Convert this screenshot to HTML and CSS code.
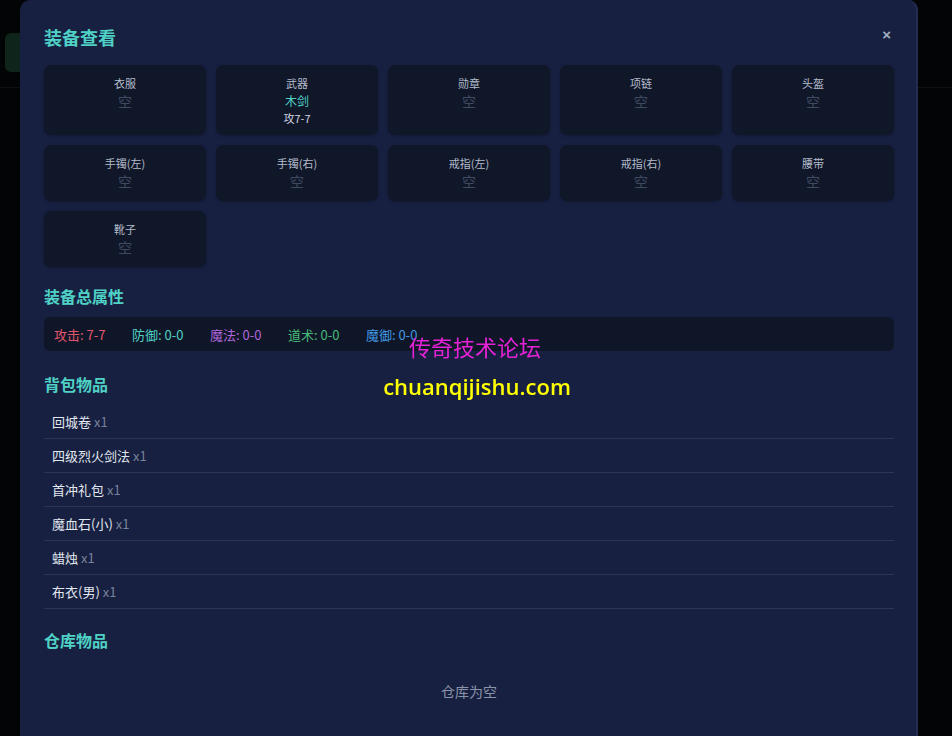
FILE: index.html
```html
<!DOCTYPE html>
<html lang="zh-CN">
<head>
  <meta charset="UTF-8">
  <title>装备查看</title>
  <link rel="stylesheet" href="styles.css">
</head>
<body>

<!-- 底层页面 -->
<div class="page">
  <div class="topbar">
    <button class="back-btn"></button>
  </div>
</div>

<!-- 装备查看弹窗 -->
<div class="overlay">
  <div class="modal">
    <div class="modal-header">
      <h2>装备查看</h2>
      <span class="close">×</span>
    </div>

    <div class="equip-grid">
      <div class="slot"><div class="slot-name">衣服</div><div class="slot-empty">空</div></div>
      <div class="slot"><div class="slot-name">武器</div><div class="slot-item">木剑</div><div class="slot-attr">攻7-7</div></div>
      <div class="slot"><div class="slot-name">勋章</div><div class="slot-empty">空</div></div>
      <div class="slot"><div class="slot-name">项链</div><div class="slot-empty">空</div></div>
      <div class="slot"><div class="slot-name">头盔</div><div class="slot-empty">空</div></div>
      <div class="slot"><div class="slot-name">手镯(左)</div><div class="slot-empty">空</div></div>
      <div class="slot"><div class="slot-name">手镯(右)</div><div class="slot-empty">空</div></div>
      <div class="slot"><div class="slot-name">戒指(左)</div><div class="slot-empty">空</div></div>
      <div class="slot"><div class="slot-name">戒指(右)</div><div class="slot-empty">空</div></div>
      <div class="slot"><div class="slot-name">腰带</div><div class="slot-empty">空</div></div>
      <div class="slot"><div class="slot-name">靴子</div><div class="slot-empty">空</div></div>
    </div>

    <h3>装备总属性</h3>
    <div class="stats">
      <span class="atk">攻击: 7-7</span>
      <span class="def">防御: 0-0</span>
      <span class="mag">魔法: 0-0</span>
      <span class="tao">道术: 0-0</span>
      <span class="mdef">魔御: 0-0</span>
    </div>

    <h3>背包物品</h3>
    <ul class="bag">
      <li>回城卷 <span class="qty">x1</span></li>
      <li>四级烈火剑法 <span class="qty">x1</span></li>
      <li>首冲礼包 <span class="qty">x1</span></li>
      <li>魔血石(小) <span class="qty">x1</span></li>
      <li>蜡烛 <span class="qty">x1</span></li>
      <li>布衣(男) <span class="qty">x1</span></li>
    </ul>

    <h3>仓库物品</h3>
    <div class="empty-tip">仓库为空</div>
  </div>
</div>

<!-- 水印 -->
<div class="watermark">
  <div class="wm-cn">传奇技术论坛</div>
  <div class="wm-en">chuanqijishu.com</div>
</div>

</body>
</html>
```

FILE: styles.css
```css
body {
  margin: 0;
  background: #060709;
  font-family: "Noto Sans CJK SC", "Noto Sans", sans-serif;
  overflow: hidden;
  height: 736px;
}
.page {
  height: 100%;
}
.topbar {
  height: 88px;
  border-bottom: 1px solid #16191f;
  box-sizing: border-box;
  padding: 33px 0 0 5px;
}
.back-btn {
  width: 40px;
  height: 39px;
  background: #17392a;
  border: none;
  border-radius: 6px;
}
/* 弹窗 */
.overlay {
  position: fixed;
  top: 0; left: 0;
  width: 100%; height: 100%;
  background: rgba(0,0,0,0.35);
}
.modal {
  margin-left: 20px;
  width: 898px;
  min-height: 800px;
  box-sizing: border-box;
  background: #172041;
  box-shadow: inset -2px 0 0 #222c50;
  border-radius: 10px 10px 0 0;
  padding: 24px 24px;
}
.modal-header {
  display: flex;
  justify-content: space-between;
  align-items: center;
  margin-bottom: 15px;
}
.modal-header h2 {
  margin: 0;
  font-size: 18px;
  line-height: 26px;
  color: #4fd1c5;
}
.close {
  font-family: "Liberation Sans", sans-serif;
  font-weight: bold;
  color: #a0aec0;
  font-size: 15px;
  line-height: 20px;
  margin: -4px 3px 0 0;
}
.equip-grid {
  display: grid;
  grid-template-columns: repeat(5, 1fr);
  gap: 10px;
}
.slot {
  background: #101729;
  border-radius: 7px;
  padding: 10px 6px;
  text-align: center;
  box-shadow: 0 1px 3px rgba(0,0,0,0.25);
}
.slot-name {
  font-size: 11px;
  line-height: 16px;
  color: #b4bccb;
}
.slot-empty {
  font-size: 14px;
  line-height: 20px;
  color: #3e4a60;
}
.slot-item {
  font-size: 12px;
  line-height: 20px;
  color: #4fd1c5;
}
.slot-attr {
  font-size: 11px;
  line-height: 14px;
  color: #d2d8e2;
}
h3 {
  margin: 20px 0 10px;
  font-size: 16px;
  line-height: 22px;
  color: #4fd1c5;
}
.equip-grid + h3 {
  margin-top: 18px;
}
.stats + h3 {
  margin-top: 22px;
}
.stats {
  display: flex;
  gap: 26.5px;
  height: 34px;
  align-items: center;
  padding: 0 10px;
  background: #0f1628;
  border-radius: 6px;
  font-size: 13px;
}
.atk { color: #e5566e; }
.def { color: #4fd1c5; }
.mag { color: #b266db; }
.tao { color: #48bb78; }
.mdef { color: #4299e1; }
.bag {
  list-style: none;
  margin: 0;
  padding: 0;
}
.bag li {
  height: 34px;
  line-height: 34px;
  padding-left: 8px;
  border-bottom: 1px solid #2a3558;
  box-sizing: border-box;
  font-size: 13px;
  color: #e2e8f0;
}
.qty {
  color: #77829a;
}
.empty-tip {
  padding: 20px 0;
  line-height: 20px;
  text-align: center;
  font-size: 14px;
  color: #8a94a8;
}
/* 水印 */
.watermark {
  position: fixed;
  top: 331px;
  left: 0;
  width: 952px;
  text-align: center;
  pointer-events: none;
}
.wm-cn {
  font-size: 22px;
  line-height: 30px;
  color: #e622d6;
  margin-left: -2px;
}
.wm-en {
  font-family: "Open Sans", sans-serif;
  font-weight: 600;
  font-size: 22px;
  line-height: 30px;
  margin-top: 10px;
  margin-left: 2px;
  color: #ffff00;
}
```
